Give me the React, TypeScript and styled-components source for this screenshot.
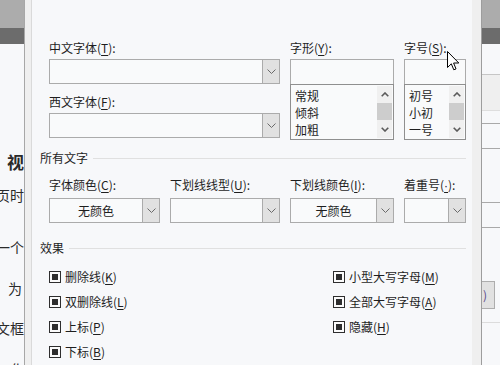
import React from "react";
import styled, { createGlobalStyle } from "styled-components";

const GlobalStyle = createGlobalStyle`
  html, body { margin: 0; padding: 0; background: #f7f8fa; }
  body { font-family: "Noto Sans CJK SC", "Noto Sans", sans-serif; }
  * { box-sizing: border-box; }
`;

const Screen = styled.div`
  width: 500px;
  height: 365px;
  display: flex;
  overflow: hidden;
  background: #f7f8fa;
`;

/* ---------- left document strip ---------- */
const DocStrip = styled.div`
  width: 25px;
  flex: none;
  display: flex;
  flex-direction: column;
  border-right: 1px solid #a7a7a7;
  overflow: hidden;
`;
const TopBar = styled.div`
  height: 28px;
  flex: none;
  background: #acacac;
`;
const TopBarDark = styled.div`
  height: 16px;
  flex: none;
  background: #6c6c6c;
`;
const DocText = styled.div`
  display: flex;
  flex-direction: column;
  padding-top: 108px;
  color: #2a2a2a;
`;
const DocLine = styled.div<{ $top: number; $bold?: boolean; $pad?: number }>`
  height: 20px;
  line-height: 20px;
  margin-top: ${(p) => p.$top}px;
  display: flex;
  justify-content: flex-end;
  white-space: nowrap;
  padding-right: ${(p) => p.$pad ?? 0}px;
  font-size: ${(p) => (p.$bold ? 17 : 14)}px;
  font-weight: ${(p) => (p.$bold ? 700 : 400)};
  font-family: "Noto Sans CJK SC", serif;
`;

/* ---------- dialog frame ---------- */
const BandLeft = styled.div`
  width: 7px;
  flex: none;
  background: #efefef;
  border-right: 1px solid #dadada;
`;
const BandRight = styled.div`
  width: 10px;
  flex: none;
  background: #efefef;
  border-right: 1px solid #9d9d9d;
`;
const Dialog = styled.div`
  width: 440px;
  flex: none;
  height: 365px;
  position: relative;
  background: #f7f8fa;
  padding: 39px 6px 0 17px;
  display: flex;
  flex-direction: column;
  color: #1e1e1e;
  font-size: 12px;
`;

const FontGrid = styled.div`
  display: grid;
  grid-template-columns: 231px 104px 62px;
  column-gap: 10px;
`;
const Column = styled.div`
  display: flex;
  flex-direction: column;
`;
const Label = styled.div<{ $top?: number; $after?: number }>`
  height: 18px;
  line-height: 18px;
  font-size: 12px;
  white-space: nowrap;
  margin-top: ${(p) => p.$top ?? 0}px;
  margin-bottom: ${(p) => p.$after ?? 2}px;
`;
const Key = styled.u`
  text-decoration-thickness: 1px;
  text-underline-offset: 2px;
`;
const DotKey = styled.u`
  font-family: "Liberation Sans", sans-serif;
  text-decoration-thickness: 1px;
  text-underline-offset: 2px;
`;

const Combo = styled.div`
  height: 25px;
  border: 1px solid #ababab;
  background: #f9fafb;
  display: flex;
`;
const ComboText = styled.div`
  flex: 1;
  text-align: center;
  line-height: 23px;
  font-size: 12px;
`;
const ComboButton = styled.div`
  width: 17px;
  flex: none;
  background: #e1e1e1;
  border-left: 1px solid #ababab;
  display: flex;
  align-items: center;
  justify-content: center;
`;

const TextBox = styled.div`
  height: 26px;
  border: 1px solid #ababab;
  background: #f9fafb;
`;
const ListBox = styled.div`
  height: 56px;
  margin-top: -1px;
  border: 1px solid #8f8f8f;
  background: #f9fafb;
  padding: 1px;
  display: flex;
`;
const ListItems = styled.div`
  flex: 1;
  padding: 1px 0 0 3px;
  display: flex;
  flex-direction: column;
`;
const ListItem = styled.div`
  height: 17px;
  line-height: 17px;
  font-size: 12px;
  white-space: nowrap;
`;
const Track = styled.div`
  width: 15px;
  flex: none;
  background: #f0f0f0;
  display: flex;
  flex-direction: column;
`;
const TrackArrow = styled.div`
  height: 17px;
  display: flex;
  align-items: center;
  justify-content: center;
`;
const Thumb = styled.div`
  height: 17px;
  background: #cdcdcd;
`;
const TrackFill = styled.div`
  flex: 1;
`;

const SectionHeader = styled.div<{ $top: number }>`
  height: 18px;
  line-height: 18px;
  margin: ${(p) => p.$top}px 0 0 -9px;
  display: flex;
  align-items: center;
  gap: 5px;
  font-size: 12px;
  &::after {
    content: "";
    flex: 1;
    border-top: 1px solid #e0e0e0;
  }
`;

const AllTextGrid = styled.div`
  display: grid;
  grid-template-columns: 111px 110px 104px 62px;
  column-gap: 10px;
`;

const EffectsGrid = styled.div`
  margin-top: 7px;
  display: grid;
  grid-template-columns: 284px auto;
  grid-template-rows: repeat(4, 25px);
  grid-auto-flow: column;
`;
const Check = styled.div`
  display: flex;
  align-items: center;
  gap: 4px;
  font-size: 12px;
  white-space: nowrap;
`;
const CheckBox = styled.span`
  width: 12px;
  height: 12px;
  flex: none;
  border: 1px solid #2e2e2e;
  background: #fbfbfb;
  display: flex;
  align-items: center;
  justify-content: center;
  &::after {
    content: "";
    width: 6px;
    height: 6px;
    background: #2e2e2e;
  }
`;

const Cursor = styled.svg`
  position: absolute;
  left: 415px;
  top: 51px;
`;

/* ---------- right strip ---------- */
const RightStrip = styled.div`
  width: 18px;
  flex: none;
  display: flex;
  flex-direction: column;
`;
const Rule = styled.div<{ $h: number; $line?: string; $bg?: string }>`
  height: ${(p) => p.$h}px;
  flex: none;
  background: ${(p) => p.$bg ?? "transparent"};
  border-bottom: 1px solid ${(p) => p.$line ?? "transparent"};
`;
const EdgeButton = styled.div`
  height: 28px;
  width: 13px;
  flex: none;
  background: #e1e1e1;
  border: 1px solid #adadad;
  border-left: none;
  font-size: 12px;
  line-height: 26px;
  color: #5a4a8a;
  overflow: hidden;
  padding-left: 1px;
`;

const Chevron = ({ up }: { up?: boolean }) => (
  <svg width="8" height="5" viewBox="0 0 8 5">
    <path
      d={up ? "M0.7 4.3 L4 1 L7.3 4.3" : "M0.7 0.7 L4 4 L7.3 0.7"}
      fill="none"
      stroke="#5a5a5a"
      strokeWidth="1.6"
    />
  </svg>
);

const DropChevron = () => (
  <svg width="9" height="5" viewBox="0 0 9 5">
    <path d="M0.5 0.5 L4.5 4.5 L8.5 0.5" fill="none" stroke="#6a6a6a" strokeWidth="1" />
  </svg>
);

const DropCombo = ({ text }: { text?: string }) => (
  <Combo>
    <ComboText>{text}</ComboText>
    <ComboButton>
      <DropChevron />
    </ComboButton>
  </Combo>
);

const List = ({ items }: { items: string[] }) => (
  <ListBox>
    <ListItems>
      {items.map((i) => (
        <ListItem key={i}>{i}</ListItem>
      ))}
    </ListItems>
    <Track>
      <TrackArrow>
        <Chevron up />
      </TrackArrow>
      <Thumb />
      <TrackFill />
      <TrackArrow>
        <Chevron />
      </TrackArrow>
    </Track>
  </ListBox>
);

const effects: [string, string][] = [
  ["删除线", "K"],
  ["双删除线", "L"],
  ["上标", "P"],
  ["下标", "B"],
  ["小型大写字母", "M"],
  ["全部大写字母", "A"],
  ["隐藏", "H"],
];

export default function App() {
  return (
    <>
      <GlobalStyle />
      <Screen>
        <DocStrip>
          <TopBar />
          <TopBarDark />
          <DocText>
            <DocLine $top={0} $bold>视</DocLine>
            <DocLine $top={13}>页时</DocLine>
            <DocLine $top={32}>一个</DocLine>
            <DocLine $top={21} $pad={2}>为</DocLine>
            <DocLine $top={20}>文框</DocLine>
            <DocLine $top={21}>化</DocLine>
          </DocText>
        </DocStrip>
        <BandLeft />
        <Dialog>
          <FontGrid>
            <Column>
              <Label>
                中文字体(<Key>T</Key>):
              </Label>
              <DropCombo />
              <Label $top={9}>
                西文字体(<Key>F</Key>):
              </Label>
              <DropCombo />
            </Column>
            <Column>
              <Label>
                字形(<Key>Y</Key>):
              </Label>
              <TextBox />
              <List items={["常规", "倾斜", "加粗"]} />
            </Column>
            <Column>
              <Label>
                字号(<Key>S</Key>):
              </Label>
              <TextBox />
              <List items={["初号", "小初", "一号"]} />
            </Column>
          </FontGrid>

          <SectionHeader $top={9}>所有文字</SectionHeader>
          <AllTextGrid>
            <Column>
              <Label $top={9} $after={4}>
                字体颜色(<Key>C</Key>):
              </Label>
              <DropCombo text="无颜色" />
            </Column>
            <Column>
              <Label $top={9} $after={4}>
                下划线线型(<Key>U</Key>):
              </Label>
              <DropCombo />
            </Column>
            <Column>
              <Label $top={9} $after={4}>
                下划线颜色(<Key>I</Key>):
              </Label>
              <DropCombo text="无颜色" />
            </Column>
            <Column>
              <Label $top={9} $after={4}>
                着重号(<DotKey>·</DotKey>):
              </Label>
              <DropCombo />
            </Column>
          </AllTextGrid>

          <SectionHeader $top={16}>效果</SectionHeader>
          <EffectsGrid>
            {effects.map(([name, key]) => (
              <Check key={key}>
                <CheckBox />
                <span>
                  {name}(<Key>{key}</Key>)
                </span>
              </Check>
            ))}
          </EffectsGrid>

          <Cursor width="13" height="21" viewBox="0 0 13 21">
            <path
              d="M0.5 0.5 L0.5 16.5 L4.3 12.8 L6.8 18.8 L9 17.9 L6.6 12 L11.8 12 Z"
              fill="#ffffff"
              stroke="#000000"
              strokeWidth="1"
              strokeLinejoin="miter"
            />
          </Cursor>
        </Dialog>
        <BandRight />
        <RightStrip>
          <TopBar />
          <TopBarDark />
          <Rule $h={31} $line="#c6c6c6" />
          <Rule $h={36} $bg="#efefef" $line="#dedede" />
          <Rule $h={13} $line="#a9a9a9" />
          <Rule $h={25} $line="#a9a9a9" />
          <Rule $h={54} $line="#a9a9a9" />
          <Rule $h={25} $line="#a9a9a9" />
          <Rule $h={53} />
          <EdgeButton>)</EdgeButton>
          <Rule $h={14} $line="#dcdcdc" />
        </RightStrip>
      </Screen>
    </>
  );
}
